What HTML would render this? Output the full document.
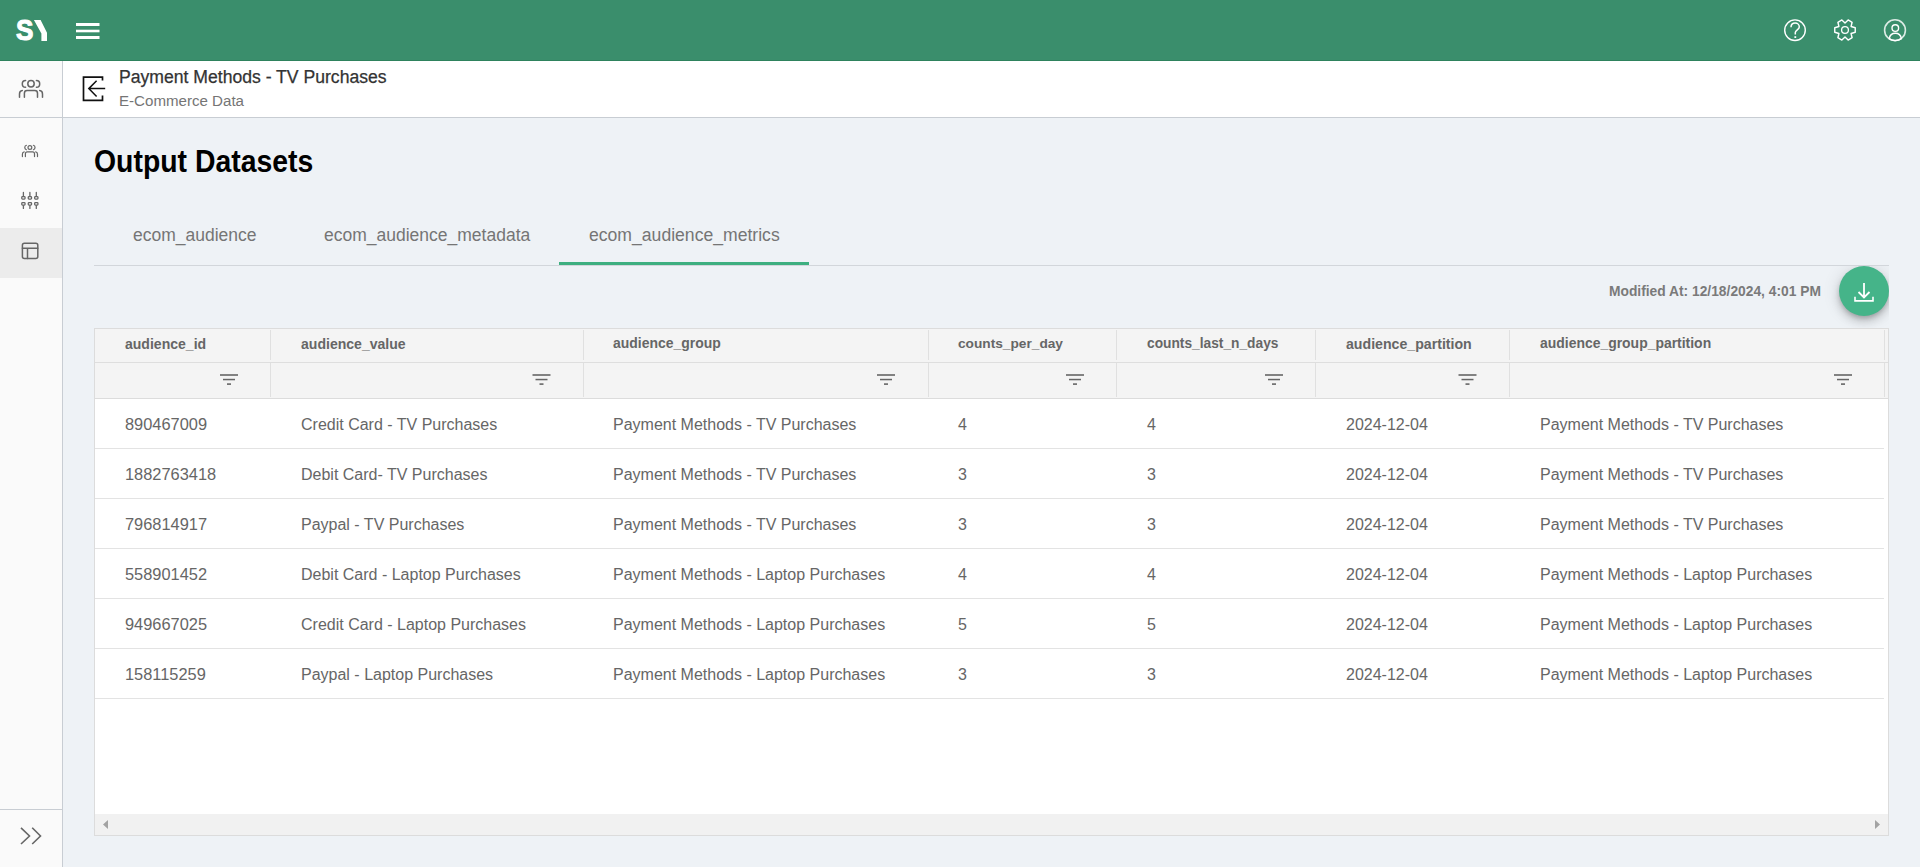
<!DOCTYPE html>
<html><head><meta charset="utf-8">
<style>
*{box-sizing:border-box;margin:0;padding:0}
html,body{width:1920px;height:867px;overflow:hidden;background:#eef2f6;font-family:"Liberation Sans",sans-serif;position:relative}
.a{position:absolute}
.t{position:absolute;white-space:nowrap}
svg{position:absolute;overflow:visible}
</style></head><body>
<div class="a" style="left:0;top:0;width:1920px;height:60px;background:#3a8e6c"></div>
<div class="a" style="left:0;top:60px;width:1920px;height:1px;background:#2e825d"></div>
<svg style="left:0;top:0" width="60" height="60" viewBox="0 0 60 60">
<text x="16" y="40.3" font-family="Liberation Sans" font-weight="bold" font-size="30" fill="#fff" stroke="#fff" stroke-width="1.1" transform="translate(16 0) scale(0.87 1) translate(-16 0)">S</text>
<path d="M33.9 19.9 L40.6 19.9 L47 32.8 L47 41 L41.4 41 L41.4 33.6 Z" fill="#fff"/>
</svg>
<svg style="left:0;top:0" width="120" height="60">
<rect x="76" y="23" width="23.5" height="3" fill="#fff"/>
<rect x="76" y="29.7" width="23.5" height="2.6" fill="#fff"/>
<rect x="76" y="36" width="23.5" height="3" fill="#fff"/>
</svg>
<svg style="left:1770px;top:0" width="150" height="60" viewBox="1770 0 150 60" fill="none" stroke="#fff" stroke-width="1.4">
<circle cx="1795" cy="30.2" r="10.3"/>
<path d="M1791 27.3 C1791 24.8 1792.8 23 1795.2 23 C1797.6 23 1799.3 24.8 1799.3 27 C1799.3 29.6 1795.3 30 1795.3 32.5 L1795.3 34.5" stroke-width="1.5"/>
<rect x="1794.4" y="36.2" width="1.8" height="1.8" fill="#fff" stroke="none"/>
<path d="M1851.06 26.50 L1855.25 27.71 L1855.25 32.29 L1851.06 33.50 L1852.11 37.73 L1848.14 40.02 L1845.00 37.00 L1841.86 40.02 L1837.89 37.73 L1838.94 33.50 L1834.75 32.29 L1834.75 27.71 L1838.94 26.50 L1837.89 22.27 L1841.86 19.98 L1845.00 23.00 L1848.14 19.98 L1852.11 22.27 Z" stroke-width="1.4" stroke-linejoin="round"/>
<circle cx="1845" cy="30" r="3.4" stroke-width="1.3"/>
<circle cx="1895" cy="30.2" r="10.4" stroke="rgba(255,255,255,0.82)" stroke-width="1.6"/>
<circle cx="1895.3" cy="28.1" r="3.3" stroke-width="1.4"/>
<path d="M1889.2 38.6 C1889.8 35.2 1892.2 33.3 1895.3 33.3 C1898.4 33.3 1900.8 35.2 1901.4 38.6 C1899.6 40 1897.5 40.6 1895.3 40.6 C1893.1 40.6 1891 40 1889.2 38.6 Z" stroke-width="1.4"/>
</svg>
<div class="a" style="left:0;top:61px;width:62px;height:806px;background:#fafafa"></div>
<div class="a" style="left:62px;top:61px;width:1px;height:806px;background:#c8cdd3"></div>
<div class="a" style="left:0;top:228px;width:62px;height:50px;background:#ececec"></div>
<div class="a" style="left:0;top:809px;width:62px;height:1px;background:#c8cdd3"></div>
<div class="a" style="left:63px;top:61px;width:1857px;height:56px;background:#fff"></div>
<div class="a" style="left:0;top:117px;width:1920px;height:1px;background:#c8cdd3"></div>
<svg style="left:0;top:0" width="63" height="867" fill="none" stroke="#666" stroke-width="1.5" stroke-linecap="round">
<g transform="translate(15 74)">
<circle cx="16" cy="9.8" r="3.2"/>
<path d="M10.6 6.6 A3.3 3.3 0 0 0 10.6 13.2"/>
<path d="M21.4 6.6 A3.3 3.3 0 0 1 21.4 13.2"/>
<path d="M9.4 23.3 L9.4 19.3 Q9.4 16.6 12.1 16.6 L19.8 16.6 Q22.5 16.6 22.5 19.3 L22.5 23.3"/>
<path d="M4.5 23.3 L4.5 20 Q4.5 17 7.3 16.6"/>
<path d="M27.5 23.3 L27.5 20 Q27.5 17 24.7 16.6"/>
</g>
<g transform="translate(14 135)" stroke-width="1.2">
<circle cx="15.9" cy="12.5" r="1.9"/>
<path d="M12.4 10.3 A2.3 2.3 0 0 0 12.4 14.7"/>
<path d="M19.4 10.3 A2.3 2.3 0 0 1 19.4 14.7"/>
<path d="M11.4 21.6 L11.4 18.8 Q11.4 16.9 13.3 16.9 L18.6 16.9 Q20.5 16.9 20.5 18.8 L20.5 21.6"/>
<path d="M8.4 21.6 L8.4 19.2 Q8.4 17.2 10.2 16.9"/>
<path d="M23.5 21.6 L23.5 19.2 Q23.5 17.2 21.7 16.9"/>
</g>
<g stroke-width="1.3">
<path d="M23.4 192.4 L23.4 196.2 M29.9 192.4 L29.9 196.2 M36.3 192.4 L36.3 196.2 M23.4 205.6 L23.4 208.4 M29.9 205.6 L29.9 208.4 M36.3 205.6 L36.3 208.4"/>
<rect x="21.75" y="196.7" width="3.3" height="2.4" rx="0.8"/>
<rect x="21.75" y="202.65" width="3.3" height="2.4" rx="0.8"/>
<rect x="28.25" y="196.7" width="3.3" height="2.4" rx="0.8"/>
<rect x="28.25" y="202.65" width="3.3" height="2.4" rx="0.8"/>
<rect x="34.65" y="196.7" width="3.3" height="2.4" rx="0.8"/>
<rect x="34.65" y="202.65" width="3.3" height="2.4" rx="0.8"/>
</g>
<g stroke-width="1.5">
<rect x="22.4" y="243.2" width="15.4" height="15.3" rx="2"/>
<path d="M22.4 248.3 L37.8 248.3 M27.5 248.3 L27.5 258.5"/>
</g>
<path d="M21 827.8 L29.5 836 L21 844 M32.2 827.8 L40.5 836 L32.2 844" stroke-width="1.6" stroke-linecap="butt"/>
</svg>
<svg style="left:0;top:0" width="120" height="117" fill="none" stroke="#111" stroke-width="1.7">
<path d="M102.5 80.6 L102.5 77.2 L83.5 77.2 L83.5 100.3 L102.5 100.3 L102.5 95.6"/>
<path d="M88.8 88.6 L105.2 88.6 M96.6 80.7 L88.8 88.6 L96.6 96.6" stroke-width="1.5"/>
</svg>
<div class="t" style="left:119px;top:68.60px;font-size:17.6px;line-height:17.6px;color:#333;-webkit-text-stroke:0.25px #333">Payment Methods - TV Purchases</div>
<div class="t" style="left:119px;top:92.92px;font-size:15.1px;line-height:15.1px;color:#757575">E-Commerce Data</div>
<div class="t" style="left:94px;top:146.18px;font-size:30.5px;line-height:30.5px;color:#000;font-weight:700;transform:scaleX(0.931);transform-origin:0 0">Output Datasets</div>
<div class="t" style="left:133px;top:226.69px;font-size:17.5px;line-height:17.5px;color:#757575">ecom_audience</div>
<div class="t" style="left:324px;top:226.69px;font-size:17.5px;line-height:17.5px;color:#757575">ecom_audience_metadata</div>
<div class="t" style="left:589px;top:226.60px;font-size:17.6px;line-height:17.6px;color:#757575">ecom_audience_metrics</div>
<div class="a" style="left:94px;top:265px;width:1795px;height:1px;background:#d2d6db"></div>
<div class="a" style="left:559px;top:262px;width:250px;height:3px;background:#3daf80"></div>
<div class="t" style="left:1609px;top:285.02px;font-size:13.8px;line-height:13.8px;color:#7a7a7a;font-weight:700">Modified At: 12/18/2024, 4:01 PM</div>
<div class="a" style="left:94px;top:328px;width:1795px;height:508px;background:#fff;border:1px solid #dcdcdc"></div>
<div class="a" style="left:95px;top:329px;width:1793px;height:69px;background:#f4f4f4"></div>
<div class="a" style="left:95px;top:362px;width:1793px;height:1px;background:#dedede"></div>
<div class="a" style="left:95px;top:398px;width:1793px;height:1px;background:#dcdcdc"></div>
<div class="a" style="left:270px;top:330px;width:1px;height:30px;background:#e0e0e0"></div>
<div class="a" style="left:270px;top:363px;width:1px;height:34px;background:#e0e0e0"></div>
<div class="a" style="left:583px;top:330px;width:1px;height:30px;background:#e0e0e0"></div>
<div class="a" style="left:583px;top:363px;width:1px;height:34px;background:#e0e0e0"></div>
<div class="a" style="left:928px;top:330px;width:1px;height:30px;background:#e0e0e0"></div>
<div class="a" style="left:928px;top:363px;width:1px;height:34px;background:#e0e0e0"></div>
<div class="a" style="left:1116px;top:330px;width:1px;height:30px;background:#e0e0e0"></div>
<div class="a" style="left:1116px;top:363px;width:1px;height:34px;background:#e0e0e0"></div>
<div class="a" style="left:1315px;top:330px;width:1px;height:30px;background:#e0e0e0"></div>
<div class="a" style="left:1315px;top:363px;width:1px;height:34px;background:#e0e0e0"></div>
<div class="a" style="left:1509px;top:330px;width:1px;height:30px;background:#e0e0e0"></div>
<div class="a" style="left:1509px;top:363px;width:1px;height:34px;background:#e0e0e0"></div>
<div class="a" style="left:1884px;top:330px;width:1px;height:30px;background:#e0e0e0"></div>
<div class="a" style="left:1884px;top:363px;width:1px;height:34px;background:#e0e0e0"></div>
<div class="t" style="left:125px;top:336.87px;font-size:14.04px;line-height:14.04px;color:#666;font-weight:700">audience_id</div>
<div class="t" style="left:301px;top:336.86px;font-size:14.05px;line-height:14.05px;color:#666;font-weight:700">audience_value</div>
<div class="t" style="left:613px;top:336.93px;font-size:13.96px;line-height:13.96px;color:#666;font-weight:700">audience_group</div>
<div class="t" style="left:958px;top:337.15px;font-size:13.7px;line-height:13.7px;color:#666;font-weight:700">counts_per_day</div>
<div class="t" style="left:1147px;top:337.11px;font-size:13.75px;line-height:13.75px;color:#666;font-weight:700">counts_last_n_days</div>
<div class="t" style="left:1346px;top:336.77px;font-size:14.15px;line-height:14.15px;color:#666;font-weight:700">audience_partition</div>
<div class="t" style="left:1540px;top:336.95px;font-size:13.94px;line-height:13.94px;color:#666;font-weight:700">audience_group_partition</div>
<svg style="left:0;top:0" width="1920" height="400" fill="#666"><rect x="220.0" y="374.2" width="18" height="1.6"/><rect x="223.0" y="378.8" width="12" height="1.5"/><rect x="227.0" y="383.3" width="4" height="1.6"/><rect x="532.5" y="374.2" width="18" height="1.6"/><rect x="535.5" y="378.8" width="12" height="1.5"/><rect x="539.5" y="383.3" width="4" height="1.6"/><rect x="877.0" y="374.2" width="18" height="1.6"/><rect x="880.0" y="378.8" width="12" height="1.5"/><rect x="884.0" y="383.3" width="4" height="1.6"/><rect x="1066.0" y="374.2" width="18" height="1.6"/><rect x="1069.0" y="378.8" width="12" height="1.5"/><rect x="1073.0" y="383.3" width="4" height="1.6"/><rect x="1265.0" y="374.2" width="18" height="1.6"/><rect x="1268.0" y="378.8" width="12" height="1.5"/><rect x="1272.0" y="383.3" width="4" height="1.6"/><rect x="1458.5" y="374.2" width="18" height="1.6"/><rect x="1461.5" y="378.8" width="12" height="1.5"/><rect x="1465.5" y="383.3" width="4" height="1.6"/><rect x="1834.0" y="374.2" width="18" height="1.6"/><rect x="1837.0" y="378.8" width="12" height="1.5"/><rect x="1841.0" y="383.3" width="4" height="1.6"/></svg>
<div class="t" style="left:125px;top:415.92px;font-size:16.4px;line-height:16.4px;color:#666">890467009</div>
<div class="t" style="left:301px;top:416.86px;font-size:16px;line-height:16px;color:#666">Credit Card - TV Purchases</div>
<div class="t" style="left:613px;top:416.86px;font-size:16px;line-height:16px;color:#666">Payment Methods - TV Purchases</div>
<div class="t" style="left:958px;top:416.86px;font-size:16px;line-height:16px;color:#666">4</div>
<div class="t" style="left:1147px;top:416.86px;font-size:16px;line-height:16px;color:#666">4</div>
<div class="t" style="left:1346px;top:416.86px;font-size:16px;line-height:16px;color:#666">2024-12-04</div>
<div class="t" style="left:1540px;top:416.86px;font-size:16px;line-height:16px;color:#666">Payment Methods - TV Purchases</div>
<div class="a" style="left:95px;top:448px;width:1789px;height:1px;background:#e3e3e3"></div>
<div class="t" style="left:125px;top:465.92px;font-size:16.4px;line-height:16.4px;color:#666">1882763418</div>
<div class="t" style="left:301px;top:466.86px;font-size:16px;line-height:16px;color:#666">Debit Card- TV Purchases</div>
<div class="t" style="left:613px;top:466.86px;font-size:16px;line-height:16px;color:#666">Payment Methods - TV Purchases</div>
<div class="t" style="left:958px;top:466.86px;font-size:16px;line-height:16px;color:#666">3</div>
<div class="t" style="left:1147px;top:466.86px;font-size:16px;line-height:16px;color:#666">3</div>
<div class="t" style="left:1346px;top:466.86px;font-size:16px;line-height:16px;color:#666">2024-12-04</div>
<div class="t" style="left:1540px;top:466.86px;font-size:16px;line-height:16px;color:#666">Payment Methods - TV Purchases</div>
<div class="a" style="left:95px;top:498px;width:1789px;height:1px;background:#e3e3e3"></div>
<div class="t" style="left:125px;top:515.92px;font-size:16.4px;line-height:16.4px;color:#666">796814917</div>
<div class="t" style="left:301px;top:516.86px;font-size:16px;line-height:16px;color:#666">Paypal - TV Purchases</div>
<div class="t" style="left:613px;top:516.86px;font-size:16px;line-height:16px;color:#666">Payment Methods - TV Purchases</div>
<div class="t" style="left:958px;top:516.86px;font-size:16px;line-height:16px;color:#666">3</div>
<div class="t" style="left:1147px;top:516.86px;font-size:16px;line-height:16px;color:#666">3</div>
<div class="t" style="left:1346px;top:516.86px;font-size:16px;line-height:16px;color:#666">2024-12-04</div>
<div class="t" style="left:1540px;top:516.86px;font-size:16px;line-height:16px;color:#666">Payment Methods - TV Purchases</div>
<div class="a" style="left:95px;top:548px;width:1789px;height:1px;background:#e3e3e3"></div>
<div class="t" style="left:125px;top:565.92px;font-size:16.4px;line-height:16.4px;color:#666">558901452</div>
<div class="t" style="left:301px;top:566.86px;font-size:16px;line-height:16px;color:#666">Debit Card - Laptop Purchases</div>
<div class="t" style="left:613px;top:566.86px;font-size:16px;line-height:16px;color:#666">Payment Methods - Laptop Purchases</div>
<div class="t" style="left:958px;top:566.86px;font-size:16px;line-height:16px;color:#666">4</div>
<div class="t" style="left:1147px;top:566.86px;font-size:16px;line-height:16px;color:#666">4</div>
<div class="t" style="left:1346px;top:566.86px;font-size:16px;line-height:16px;color:#666">2024-12-04</div>
<div class="t" style="left:1540px;top:566.86px;font-size:16px;line-height:16px;color:#666">Payment Methods - Laptop Purchases</div>
<div class="a" style="left:95px;top:598px;width:1789px;height:1px;background:#e3e3e3"></div>
<div class="t" style="left:125px;top:615.92px;font-size:16.4px;line-height:16.4px;color:#666">949667025</div>
<div class="t" style="left:301px;top:616.86px;font-size:16px;line-height:16px;color:#666">Credit Card - Laptop Purchases</div>
<div class="t" style="left:613px;top:616.86px;font-size:16px;line-height:16px;color:#666">Payment Methods - Laptop Purchases</div>
<div class="t" style="left:958px;top:616.86px;font-size:16px;line-height:16px;color:#666">5</div>
<div class="t" style="left:1147px;top:616.86px;font-size:16px;line-height:16px;color:#666">5</div>
<div class="t" style="left:1346px;top:616.86px;font-size:16px;line-height:16px;color:#666">2024-12-04</div>
<div class="t" style="left:1540px;top:616.86px;font-size:16px;line-height:16px;color:#666">Payment Methods - Laptop Purchases</div>
<div class="a" style="left:95px;top:648px;width:1789px;height:1px;background:#e3e3e3"></div>
<div class="t" style="left:125px;top:665.92px;font-size:16.4px;line-height:16.4px;color:#666">158115259</div>
<div class="t" style="left:301px;top:666.86px;font-size:16px;line-height:16px;color:#666">Paypal - Laptop Purchases</div>
<div class="t" style="left:613px;top:666.86px;font-size:16px;line-height:16px;color:#666">Payment Methods - Laptop Purchases</div>
<div class="t" style="left:958px;top:666.86px;font-size:16px;line-height:16px;color:#666">3</div>
<div class="t" style="left:1147px;top:666.86px;font-size:16px;line-height:16px;color:#666">3</div>
<div class="t" style="left:1346px;top:666.86px;font-size:16px;line-height:16px;color:#666">2024-12-04</div>
<div class="t" style="left:1540px;top:666.86px;font-size:16px;line-height:16px;color:#666">Payment Methods - Laptop Purchases</div>
<div class="a" style="left:95px;top:698px;width:1789px;height:1px;background:#e3e3e3"></div>
<div class="a" style="left:95px;top:814px;width:1793px;height:21px;background:#f1f1f1"></div>
<svg style="left:0;top:0" width="1920" height="867" fill="#a3a3a3">
<path d="M108 820 L103 824.5 L108 829 Z"/>
<path d="M1875 820 L1880 824.5 L1875 829 Z"/>
</svg>
<div class="a" style="left:94px;top:266px;width:1795px;height:62px;overflow:hidden">
<div class="a" style="left:1745px;top:0;width:50px;height:50px;border-radius:50%;background:#45b489;box-shadow:0 3px 5px -1px rgba(0,0,0,.2),0 6px 10px 0 rgba(0,0,0,.14),0 1px 18px 0 rgba(0,0,0,.12)"></div>
<svg style="left:1745px;top:0" width="50" height="50" fill="none" stroke="#fff" stroke-width="1.8">
<path d="M25 17 L25 31 M19.5 26 L25 31.5 L30.5 26"/>
<path d="M16 30.8 L16 34.9 L34 34.9 L34 30.8" stroke-width="1.6"/>
</svg>
</div>
</body></html>
